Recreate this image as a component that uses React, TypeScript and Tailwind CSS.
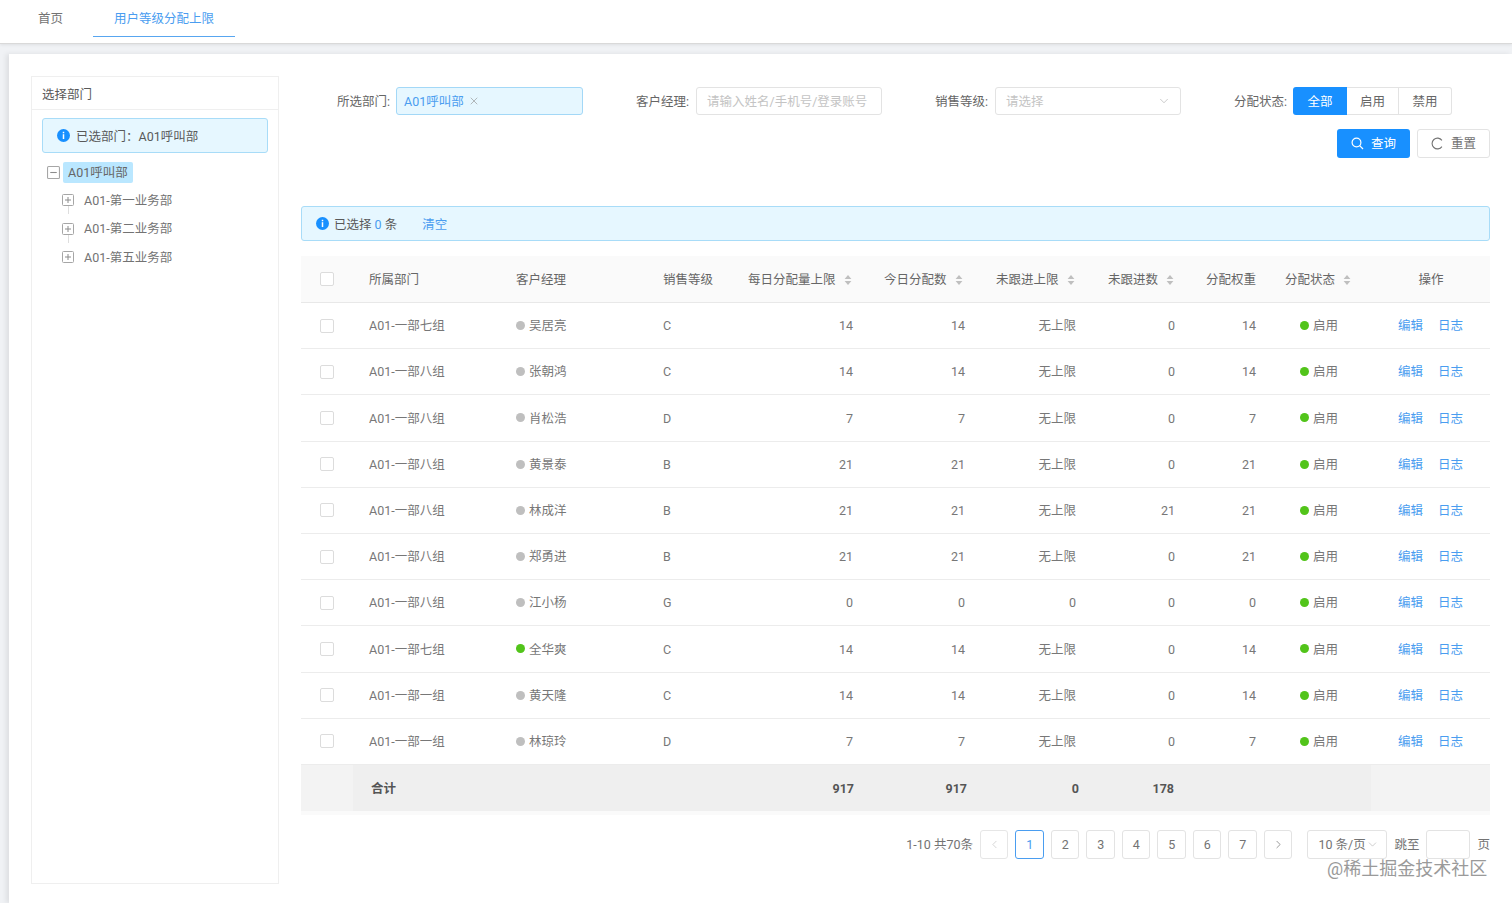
import React from 'react';
import { ChevronDown, ChevronLeft, ChevronRight, X } from 'lucide-react';

interface RowData {
  dept: string;
  manager: string;
  online?: boolean;
  level: string;
  daily: number;
  today: number;
  limit: string;
  pending: number;
  weight: number;
}

const rows: RowData[] = [
  { dept: 'A01-一部七组', manager: '吴居亮', level: 'C', daily: 14, today: 14, limit: '无上限', pending: 0, weight: 14 },
  { dept: 'A01-一部八组', manager: '张朝鸿', level: 'C', daily: 14, today: 14, limit: '无上限', pending: 0, weight: 14 },
  { dept: 'A01-一部八组', manager: '肖松浩', level: 'D', daily: 7, today: 7, limit: '无上限', pending: 0, weight: 7 },
  { dept: 'A01-一部八组', manager: '黄景泰', level: 'B', daily: 21, today: 21, limit: '无上限', pending: 0, weight: 21 },
  { dept: 'A01-一部八组', manager: '林成洋', level: 'B', daily: 21, today: 21, limit: '无上限', pending: 21, weight: 21 },
  { dept: 'A01-一部八组', manager: '郑勇进', level: 'B', daily: 21, today: 21, limit: '无上限', pending: 0, weight: 21 },
  { dept: 'A01-一部八组', manager: '江小杨', level: 'G', daily: 0, today: 0, limit: '0', pending: 0, weight: 0 },
  { dept: 'A01-一部七组', manager: '全华爽', online: true, level: 'C', daily: 14, today: 14, limit: '无上限', pending: 0, weight: 14 },
  { dept: 'A01-一部一组', manager: '黄天隆', level: 'C', daily: 14, today: 14, limit: '无上限', pending: 0, weight: 14 },
  { dept: 'A01-一部一组', manager: '林琼玲', level: 'D', daily: 7, today: 7, limit: '无上限', pending: 0, weight: 7 },
];

const gridCols = 'grid grid-cols-[52px_147px_147px_85px_136px_112px_112px_100px_77px_114px_107px]';
const pages = [1, 2, 3, 4, 5, 6, 7];

const InfoIcon = () => (
  <svg width="13" height="13" viewBox="0 0 14 14" className="shrink-0">
    <circle cx="7" cy="7" r="7" fill="#1890ff" />
    <rect x="6.2" y="3" width="1.6" height="1.6" fill="#fff" />
    <rect x="6.2" y="5.6" width="1.6" height="5.2" fill="#fff" />
  </svg>
);

const SortIcon = () => (
  <svg width="8" height="12" viewBox="0 0 8 12" className="shrink-0">
    <path d="M4 1 L7.4 5 H0.6 Z" fill="#bfbfbf" />
    <path d="M4 11 L7.4 7 H0.6 Z" fill="#bfbfbf" />
  </svg>
);

const TreeToggle = ({ open, small }: { open?: boolean; small?: boolean }) => (
  <svg width={small ? 12 : 13} height={small ? 12 : 13} viewBox="0 0 12 12" className="shrink-0">
    <rect x="0.5" y="0.5" width="11" height="11" rx="1" fill="#fff" stroke="#a6a6a6" />
    <path d="M3 6 H9" stroke="#8c8c8c" />
    {!open && <path d="M6 3 V9" stroke="#8c8c8c" />}
  </svg>
);

const Checkbox = () => <span className="block h-[14px] w-[14px] rounded-[2px] border border-[#dcdcdc] bg-white" />;

const TreeChild = ({ label, last }: { label: string; last?: boolean }) => (
  <div className="relative flex h-[28.5px] items-center pl-[20px]">
    <TreeToggle small />
    <span className="ml-[10px] pt-[2px] text-[#737373]">{label}</span>
    {!last && <span className="absolute left-[26px] top-[20px] h-[8px] border-l border-[#dedede]" />}
  </div>
);

const HeaderCell = ({ label, sort, className = 'px-[16px]' }: { label: string; sort?: boolean; className?: string }) => (
  <div className={`flex items-center gap-[8px] whitespace-nowrap pt-[2px] ${className}`}>
    <span>{label}</span>
    {sort && <SortIcon />}
  </div>
);

const Filter = ({ label, wide, children }: { label: string; wide?: boolean; children: React.ReactNode }) => (
  <div className={`flex items-center ${wide ? 'gap-[7px]' : 'gap-[6px]'}`}>
    <span className="w-[53px] whitespace-nowrap pt-[2px] text-[#666]">{label}</span>
    {children}
  </div>
);

export default function App() {
  return (
    <div className="relative h-[903px] w-[1512px] overflow-hidden bg-[#f0f2f5] font-['Roboto','Noto_Sans_CJK_SC',sans-serif] text-[12.5px] text-[#777]">
      {/* top tabs */}
      <div className="flex h-[44px] items-start border-b border-[#d9d9d9] bg-white pl-[38px] shadow-[0_1px_3px_rgba(0,0,0,0.08)]">
        <div className="flex h-[37px] items-center pt-[2px] text-[#737373]">首页</div>
        <div className="ml-[30px] flex h-[37px] w-[142px] items-center justify-center border-b border-[#58a6f0] pt-[2px] text-[#4a9df0]">
          用户等级分配上限
        </div>
      </div>

      <div className="ml-[9px] mt-[10px] flex h-[849px] gap-[22px] bg-white pl-[22px] pt-[22px] shadow-[-3px_0_5px_rgba(0,0,0,0.08)]">
        {/* left department tree */}
        <div className="h-[808px] w-[248px] border border-[#efefef]">
          <div className="flex h-[33px] items-center border-b border-[#efefef] pl-[10px] pt-[4px] text-[#595959]">选择部门</div>
          <div className="px-[10px] pt-[8px]">
            <div className="flex h-[35px] items-center gap-[6px] rounded-[3px] border border-[#a8dcf8] bg-[#e6f7ff] pl-[14px] text-[#595959]">
              <InfoIcon />
              <span className="pt-[4px]">已选部门：A01呼叫部</span>
            </div>
            <div className="mt-[9px] flex h-[21px] items-center pl-[5px]">
              <TreeToggle open />
              <span className="ml-[3px] flex h-[21px] items-center rounded-[2px] bg-[#bae7ff] px-[5px] pt-[2px] text-[#666]">A01呼叫部</span>
            </div>
            <div className="mt-[3px]">
              <TreeChild label="A01-第一业务部" />
              <TreeChild label="A01-第二业务部" />
              <TreeChild label="A01-第五业务部" last />
            </div>
          </div>
        </div>

        {/* right content */}
        <div className="w-[1189px] pt-[11px]">
          <div className="flex gap-[53px] pl-[36px]">
            <Filter label="所选部门:">
              <div className="flex h-[28px] w-[187px] items-center rounded-[3px] border border-[#a3d8f7] bg-[#e6f7ff] pl-[7px] text-[#4a9df0]">
                <span className="pt-[2px]">A01呼叫部</span>
                <X size={12} strokeWidth={1.2} className="ml-[4px] text-[#8c8c8c]" />
              </div>
            </Filter>
            <Filter label="客户经理:" wide>
              <div className="flex h-[28px] w-[186px] items-center rounded-[3px] border border-[#e3e3e3] pl-[10px] pt-[2px] text-[#c4c4c4]">
                请输入姓名/手机号/登录账号
              </div>
            </Filter>
            <Filter label="销售等级:" wide>
              <div className="flex h-[28px] w-[186px] items-center justify-between rounded-[3px] border border-[#e3e3e3] pl-[10px] pr-[9px] text-[#c4c4c4]">
                <span className="pt-[2px]">请选择</span>
                <ChevronDown size={14} strokeWidth={1} className="text-[#a6a6a6]" />
              </div>
            </Filter>
            <Filter label="分配状态:">
              <div className="flex h-[28px]">
                <div className="flex w-[54px] items-center justify-center rounded-l-[3px] bg-[#1890ff] pt-[2px] text-white">全部</div>
                <div className="flex w-[52px] items-center justify-center border-y border-r border-[#e3e3e3] pt-[2px] text-[#666]">启用</div>
                <div className="flex w-[53px] items-center justify-center rounded-r-[3px] border-y border-r border-[#e3e3e3] pt-[2px] text-[#666]">禁用</div>
              </div>
            </Filter>
          </div>

          <div className="mt-[14px] flex justify-end gap-[7px]">
            <div className="flex h-[29px] w-[73px] items-center justify-center gap-[7px] rounded-[3px] bg-[#1890ff] text-white">
              <svg width="13" height="13" viewBox="0 0 13 13" fill="none" stroke="#fff" strokeWidth="1.2">
                <circle cx="5.5" cy="5.5" r="4.4" />
                <path d="M8.7 8.7 L12 12" />
              </svg>
              <span className="pt-[2px]">查询</span>
            </div>
            <div className="flex h-[29px] w-[73px] items-center justify-center gap-[7px] rounded-[3px] border border-[#e3e3e3] text-[#737373]">
              <svg width="13" height="13" viewBox="0 0 13 13" fill="none" stroke="#737373" strokeWidth="1.1">
                <path d="M10.9 3.4 A5.4 5.4 0 1 0 10.9 9.6" />
              </svg>
              <span className="pt-[2px]">重置</span>
            </div>
          </div>

          <div className="mt-[48px] flex h-[35px] items-center rounded-[3px] border border-[#a8dcf8] bg-[#e6f7ff] pl-[14px] text-[#595959]">
            <InfoIcon />
            <span className="ml-[5px] pt-[4px]">
              已选择 <span className="text-[#4a9df0]">0</span> 条
            </span>
            <span className="ml-[25px] pt-[4px] text-[#4a9df0]">清空</span>
          </div>

          {/* table */}
          <div className="mt-[15px]">
            <div className={`${gridCols} h-[47px] items-stretch border-b border-[#e8e8e8] bg-[#fafafa] text-[#666]`}>
              <div className="flex items-center justify-center">
                <Checkbox />
              </div>
              <HeaderCell label="所属部门" />
              <HeaderCell label="客户经理" />
              <HeaderCell label="销售等级" />
              <HeaderCell label="每日分配量上限" sort />
              <HeaderCell label="今日分配数" sort />
              <HeaderCell label="未跟进上限" sort />
              <HeaderCell label="未跟进数" sort />
              <HeaderCell label="分配权重" className="pl-[14px]" />
              <HeaderCell label="分配状态" sort />
              <div className="flex items-center justify-center pr-[11px] pt-[2px]">操作</div>
            </div>

            {rows.map((row, i) => (
              <div key={i} className={`${gridCols} h-[46.2px] items-center border-b border-[#ececec]`}>
                <div className="flex justify-center">
                  <Checkbox />
                </div>
                <div className="px-[16px] pt-[2px]">{row.dept}</div>
                <div className="flex items-center gap-[4px] px-[16px]">
                  <span className={`h-[9px] w-[9px] rounded-full ${row.online ? 'bg-[#52c41a]' : 'bg-[#bfbfbf]'}`} />
                  <span className="pt-[2px]">{row.manager}</span>
                </div>
                <div className="px-[16px] pt-[2px]">{row.level}</div>
                <div className="pr-[15px] pt-[2px] text-right">{row.daily}</div>
                <div className="pr-[15px] pt-[2px] text-right">{row.today}</div>
                <div className="pr-[16px] pt-[2px] text-right">{row.limit}</div>
                <div className="pr-[17px] pt-[2px] text-right">{row.pending}</div>
                <div className="pr-[13px] pt-[2px] text-right">{row.weight}</div>
                <div className="flex items-center gap-[4px] pl-[31px]">
                  <span className="h-[9px] w-[9px] rounded-full bg-[#52c41a]" />
                  <span className="pt-[2px]">启用</span>
                </div>
                <div className="flex gap-[15px] pl-[15px] pt-[2px] text-[#4a9df0]">
                  <span>编辑</span>
                  <span>日志</span>
                </div>
              </div>
            ))}

            <div className={`${gridCols} h-[46px] items-center bg-[#efefef] font-bold text-[#555]`}>
              <div className="h-full bg-[#f3f3f3]" />
              <div className="pl-[18px] pt-[2px]">合计</div>
              <div />
              <div />
              <div className="pr-[14px] pt-[2px] text-right">917</div>
              <div className="pr-[13px] pt-[2px] text-right">917</div>
              <div className="pr-[13px] pt-[2px] text-right">0</div>
              <div className="pr-[18px] pt-[2px] text-right">178</div>
              <div />
              <div />
              <div className="-ml-[12px] h-full bg-[#f3f3f3]" />
            </div>
            <div className="h-[4px] bg-[#fafafa]" />
          </div>

          {/* pagination */}
          <div className="mt-[15px] flex h-[29px] items-center justify-end text-[#737373]">
            <span className="mr-[7px] pt-[2px]">1-10 共70条</span>
            <div className="flex gap-[7px]">
              <div className="flex h-[29px] w-[28.5px] items-center justify-center rounded-[3px] border border-[#e6e6e6] text-[#bfbfbf]">
                <ChevronLeft size={13} strokeWidth={1.2} />
              </div>
              {pages.map((p) => (
                <div
                  key={p}
                  className={`flex h-[29px] w-[28.5px] items-center justify-center rounded-[3px] border pt-[2px] ${
                    p === 1 ? 'border-[#4a9df0] text-[#4a9df0]' : 'border-[#e3e3e3]'
                  }`}
                >
                  {p}
                </div>
              ))}
              <div className="flex h-[29px] w-[28.5px] items-center justify-center rounded-[3px] border border-[#e3e3e3] text-[#666]">
                <ChevronRight size={13} strokeWidth={1.2} />
              </div>
            </div>
            <div className="ml-[15px] flex h-[29px] w-[80px] items-center rounded-[3px] border border-[#e3e3e3] pl-[10px]">
              <span className="pt-[2px]">10 条/页</span>
              <ChevronDown size={13} strokeWidth={1} className="text-[#a6a6a6]" />
            </div>
            <span className="ml-[7px] pt-[2px]">跳至</span>
            <div className="ml-[7px] h-[29px] w-[44px] rounded-[3px] border border-[#e3e3e3]" />
            <span className="ml-[7px] pt-[2px]">页</span>
          </div>
        </div>
      </div>

      {/* site watermark */}
      <div className="absolute left-[1327px] top-[857px] text-[18px] leading-[24px] text-[#9a9a9a]">@稀土掘金技术社区</div>
    </div>
  );
}
